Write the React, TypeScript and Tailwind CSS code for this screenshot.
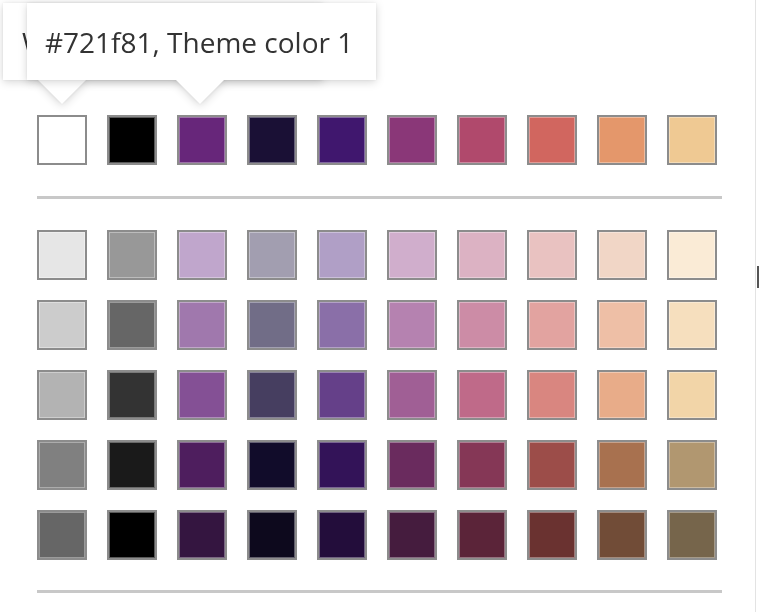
import React from "react";

const top = ["#ffffff", "#000000", "#67267a", "#1a1035", "#40176e", "#8a3778", "#b0496c", "#d1665f", "#e4976b", "#efc993"];
const shades = [
  ["#e6e6e6", "#989898", "#c0a6cc", "#a29eb0", "#b09fc6", "#d0aecc", "#dcb2c3", "#e9c2c1", "#f1d6c6", "#faebd6"],
  ["#cccccc", "#666666", "#a078ad", "#716d87", "#8a6fa8", "#b582b0", "#cc8ca6", "#e2a3a0", "#eebfa6", "#f6dfbe"],
  ["#b3b3b3", "#333333", "#845095", "#463e60", "#654089", "#a05f95", "#bf6a89", "#d98680", "#e8ac89", "#f2d5a8"],
  ["#808080", "#1a1a1a", "#4e1e5e", "#110c2a", "#331358", "#6a2b5e", "#853756", "#9c4d49", "#a8714f", "#b19770"],
  ["#666666", "#000000", "#341540", "#0d091d", "#230d3b", "#451c3e", "#5b2439", "#6a3230", "#714c37", "#76654b"],
];

function Swatch({ c }: { c: string }) {
  return (
    <div
      className="w-[50px] h-[50px] border-2 border-[#8c8c8c] shadow-[inset_0_0_0_1px_rgba(255,255,255,0.35)]"
      style={{ backgroundColor: c }}
    />
  );
}

function Row({ colors }: { colors: string[] }) {
  return (
    <div className="flex gap-[20px]">
      {colors.map((c, i) => (
        <Swatch key={i} c={c} />
      ))}
    </div>
  );
}

function Tip({ left, width, arrowLeft, text, textLeft }: { left: number; width: number; arrowLeft: number; text: string; textLeft: number }) {
  return (
    <div
      className="absolute top-[3px]"
      style={{ left, width, filter: "drop-shadow(0 2px 4px rgba(0,0,0,0.16)) drop-shadow(0 0 1px rgba(0,0,0,0.06))" }}
    >
      <div className="h-[77px] bg-white flex items-center" style={{ paddingLeft: textLeft }}>
        <span className="text-[28px] text-[#333] leading-none whitespace-nowrap">{text}</span>
      </div>
      <div
        className="w-[50px] h-[25px] bg-white -mt-px"
        style={{ marginLeft: arrowLeft, clipPath: "polygon(0 0, 100% 0, 50% 100%)" }}
      />
    </div>
  );
}

export default function App() {
  return (
    <div
      className="relative w-[759px] h-[612px] bg-white overflow-hidden"
      style={{ fontFamily: '"Open Sans", "Noto Sans", sans-serif' }}
    >
      <div className="w-[756px] h-full border-r border-[#e3e3e3] flex flex-col pl-[37px] pt-[115px]">
        <Row colors={top} />
        <div className="mt-[31px] w-[685px] h-[3px] bg-[#c8c8c8]" />
        <div className="mt-[31px] flex flex-col gap-[20px]">
          {shades.map((r, i) => (
            <Row key={i} colors={r} />
          ))}
        </div>
        <div className="mt-[30px] w-[685px] h-[3px] bg-[#c8c8c8]" />
      </div>

      <div className="absolute top-[266px] left-[757px] w-[2px] h-[22px] bg-[#555]" />

      <Tip left={3} width={320} arrowLeft={34} textLeft={19} text="White, Background 1" />
      <Tip left={27} width={349} arrowLeft={148} textLeft={18} text="#721f81, Theme color 1" />
    </div>
  );
}
